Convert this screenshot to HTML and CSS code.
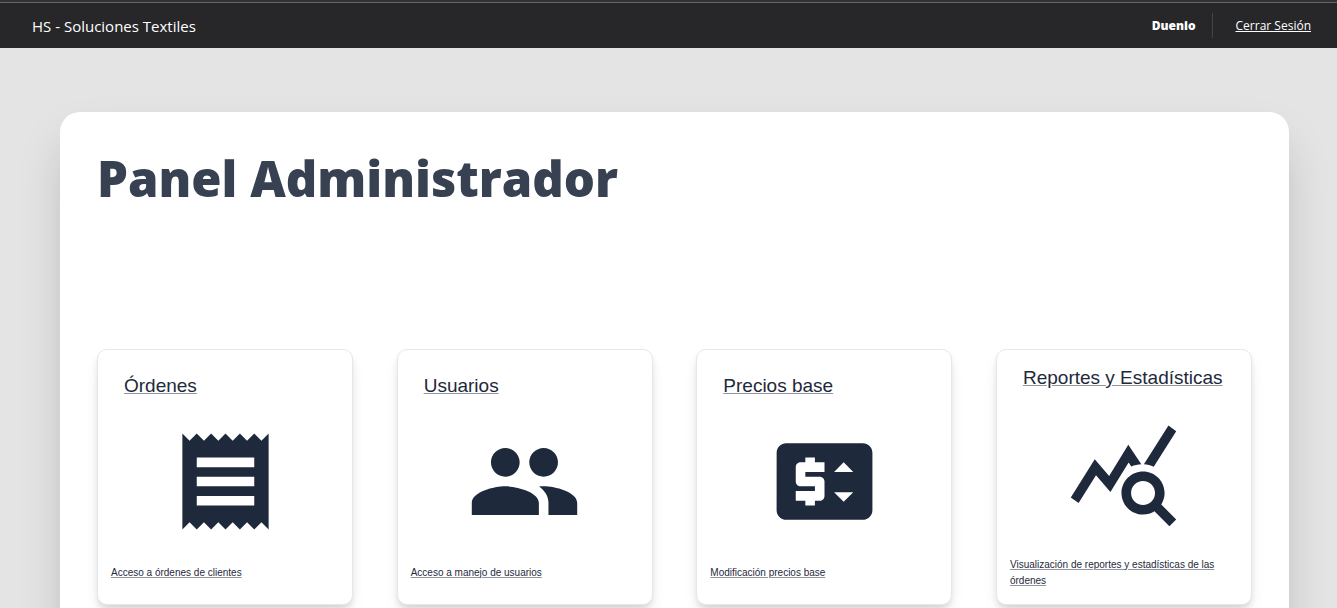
FILE: index.html
```html
<!DOCTYPE html>
<html lang="es">
<head>
<meta charset="utf-8">
<meta name="viewport" content="width=device-width, initial-scale=1">
<title>Panel Administrador</title>
<link rel="stylesheet" href="styles.css">
</head>
<body>
<header class="topbar">
  <span class="brand">HS - Soluciones Textiles</span>
  <nav class="session">
    <span class="user">Duenio</span>
    <a class="logout" href="#">Cerrar Sesión</a>
  </nav>
</header>
<main class="panel">
  <h1 class="panel-title">Panel Administrador</h1>
  <div class="cards">
    <a class="card" href="#">
      <span class="card-title">Órdenes</span>
      <svg class="card-icon" viewBox="0 0 24 24" aria-hidden="true"><path d="M18 17H6v-2h12v2zm0-4H6v-2h12v2zm0-4H6V7h12v2zM3 22l1.5-1.5L6 22l1.5-1.5L9 22l1.5-1.5L12 22l1.5-1.5L15 22l1.5-1.5L18 22l1.5-1.5L21 22V2l-1.5 1.5L18 2l-1.5 1.5L15 2l-1.5 1.5L12 2l-1.5 1.5L9 2 7.5 3.5 6 2 4.5 3.5 3 2v20z"/></svg>
      <span class="card-text">Acceso a órdenes de clientes</span>
    </a>
    <a class="card" href="#">
      <span class="card-title">Usuarios</span>
      <svg class="card-icon" viewBox="0 0 24 24" aria-hidden="true"><path d="M16 11c1.66 0 2.99-1.34 2.99-3S17.66 5 16 5c-1.66 0-3 1.34-3 3s1.34 3 3 3zm-8 0c1.66 0 2.99-1.34 2.99-3S9.66 5 8 5C6.34 5 5 6.34 5 8s1.34 3 3 3zm0 2c-2.33 0-7 1.17-7 3.5V19h14v-2.5c0-2.33-4.67-3.5-7-3.5zm8 0c-.29 0-.62.02-.97.05 1.16.84 1.97 1.97 1.97 3.45V19h6v-2.5c0-2.33-4.67-3.5-7-3.5z"/></svg>
      <span class="card-text">Acceso a manejo de usuarios</span>
    </a>
    <a class="card" href="#">
      <span class="card-title">Precios base</span>
      <svg class="card-icon" viewBox="0 0 24 24" aria-hidden="true"><path d="M20 4H4c-1.11 0-1.99.89-1.99 2L2 18c0 1.11.89 2 2 2h16c1.11 0 2-.89 2-2V6c0-1.11-.89-2-2-2zm-8 6H8v1h3c.55 0 1 .45 1 1v3c0 .55-.45 1-1 1h-1v1H8v-1H6v-2h4v-1H7c-.55 0-1-.45-1-1V9c0-.55.45-1 1-1h1V7h2v1h2v2zm4 6.25l-2-2h4l-2 2zM14 10l2-2 2 2h-4z"/></svg>
      <span class="card-text">Modificación precios base</span>
    </a>
    <a class="card" href="#">
      <span class="card-title">Reportes y Estadísticas</span>
      <svg class="card-icon" viewBox="0 0 24 24" aria-hidden="true"><path d="M19.88 18.47c.44-.7.7-1.51.7-2.39 0-2.49-2.01-4.5-4.5-4.5s-4.5 2.01-4.5 4.5 2.01 4.5 4.49 4.5c.88 0 1.7-.26 2.39-.7L21.58 23 23 21.58l-3.12-3.11zm-3.8.11c-1.38 0-2.5-1.12-2.5-2.5s1.12-2.5 2.5-2.5 2.5 1.12 2.5 2.5-1.12 2.5-2.5 2.5zm-.36-8.5c-.74.02-1.45.18-2.1.45l-.55-.83-3.8 6.18-3.01-3.52-3.63 5.81L1 17l5-8 3 3.5L13 6l2.72 4.08zm2.59.5c-.64-.28-1.33-.45-2.05-.49L21.38 2 23 3.18l-4.69 7.4z"/></svg>
      <span class="card-text">Visualización de reportes y estadísticas de las órdenes</span>
    </a>
  </div>
</main>
</body>
</html>
```
FILE: styles.css
```css
* {
  box-sizing: border-box;
}

html {
  scrollbar-width: none;
}

body {
  margin: 0;
  background: #e4e4e4;
  font-family: "Open Sans", "Noto Sans", sans-serif;
}

.topbar {
  display: flex;
  align-items: center;
  justify-content: space-between;
  height: 48px;
  padding: 3px 26px 0 32px;
  background: linear-gradient(#323232 2px, #666 2px, #666 3px, #272729 3px);
  color: #fff;
}

.brand {
  font-size: 15px;
}

.session {
  display: flex;
  align-items: center;
  font-size: 12px;
}

.user {
  padding-right: 16px;
  border-right: 1px solid #3f444d;
  font-weight: 800;
  line-height: 25px;
}

.logout {
  margin-left: 23px;
  color: #fff;
}

.panel {
  margin: 64px 48px 0 60px;
  padding: 34px 37px 64px;
  border-radius: 20px;
  background: #fff;
  box-shadow: 0 25px 50px -12px rgba(0, 0, 0, 0.25);
}

.panel-title {
  margin: 0 0 139px;
  color: #374151;
  font-size: 49px;
  font-weight: 800;
  line-height: 64px;
}

.cards {
  display: flex;
  justify-content: space-between;
}

.card {
  display: flex;
  flex-direction: column;
  justify-content: center;
  width: 256px;
  height: 256px;
  padding: 0 13px 2px;
  border: 1px solid #e5e7eb;
  border-radius: 10px;
  background: #fff;
  box-shadow: 0 4px 6px -1px rgba(0, 0, 0, 0.1), 0 10px 15px -3px rgba(0, 0, 0, 0.1);
  color: #1e293b;
  font-family: "Liberation Sans", Arial, sans-serif;
  text-decoration-color: #8f949d;
}

.card-title {
  padding-left: 13px;
  font-size: 19px;
  line-height: 28px;
}

.card-icon {
  align-self: center;
  width: 115px;
  height: 115px;
  margin: 24px 0 26px;
  fill: #1e293b;
}

.card-text {
  font-size: 10px;
  line-height: 16px;
}
```
